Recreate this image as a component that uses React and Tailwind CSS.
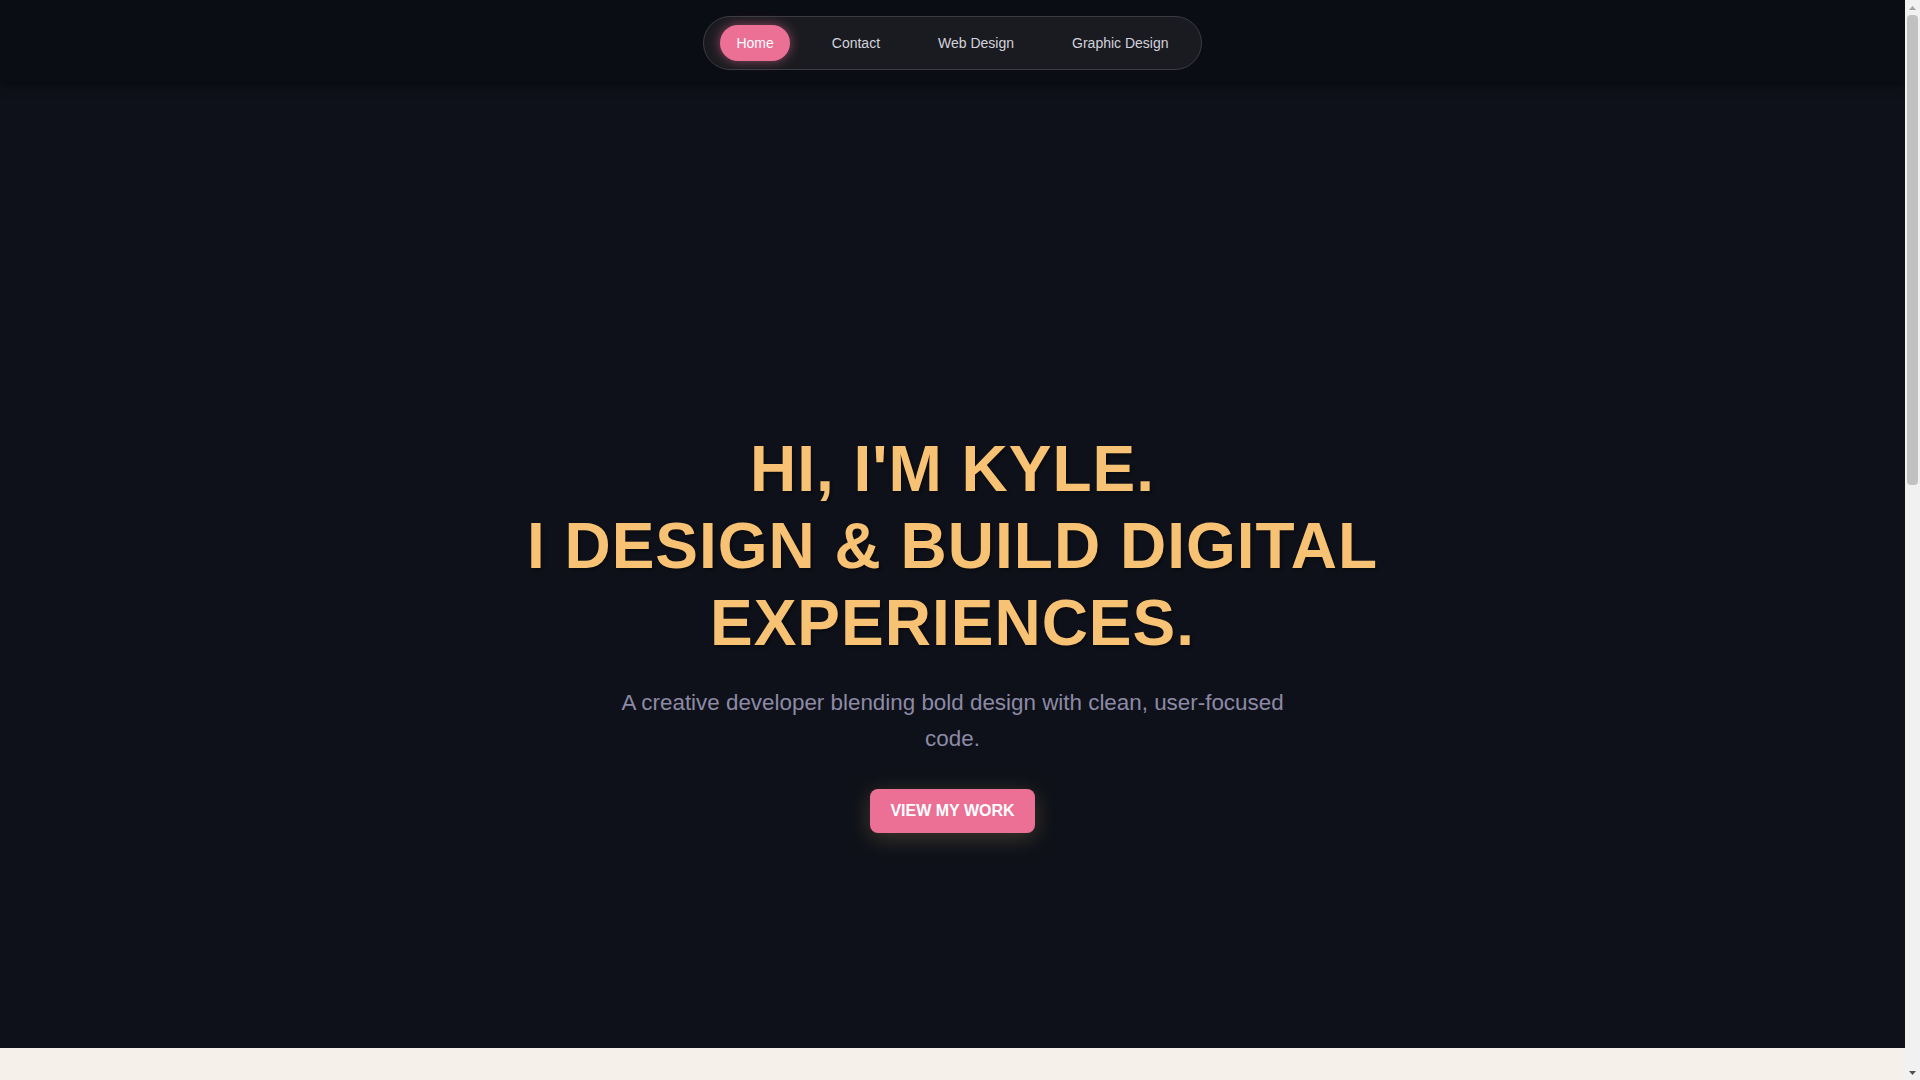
export default function App() {
  const items = ["Home", "Contact", "Web Design", "Graphic Design"];
  return (
    <div className="min-h-screen bg-[#0e1119] pr-[15px] font-['Liberation_Sans',Arial,sans-serif]">
      <header className="sticky top-0 z-10 flex justify-center bg-[#0b0d14] pt-4 pb-3 shadow-[0_2px_10px_rgba(0,0,0,0.55)]">
        <nav className="flex items-center gap-[26px] rounded-full border border-[#3b3c42] bg-[#1a1b20] px-4 py-2">
          {items.map((it, i) =>
            i === 0 ? (
              <a
                key={it}
                className="rounded-full bg-[#ec7096] px-4 py-2 text-sm leading-5 text-white shadow-[0_0_12px_rgba(236,112,150,0.55)]"
              >
                {it}
              </a>
            ) : (
              <a key={it} className="rounded-full px-4 py-2 text-sm leading-5 text-[#d3d3dd]">
                {it}
              </a>
            )
          )}
        </nav>
      </header>

      <section className="flex flex-col items-center pt-[349px] pb-[215px] text-center">
        <h1 className="text-[64px] font-bold leading-[1.2] tracking-[1px] text-[#f7c273] [text-shadow:2px_2px_3px_rgba(0,0,0,0.35)]">
          HI, I'M KYLE.
          <br />I DESIGN &amp; BUILD DIGITAL
          <br />
          EXPERIENCES.
        </h1>
        <p className="mt-6 max-w-2xl text-[22.4px] leading-[1.6] text-[#8d8aa6]">
          A creative developer blending bold design with clean, user-focused code.
        </p>
        <button className="mt-8 rounded-lg bg-[#ec7096] px-5 py-3 text-base font-bold leading-5 text-white shadow-[0_5px_22px_rgba(247,194,115,0.22)]">
          VIEW MY WORK
        </button>
      </section>

      <section className="h-[1350px] bg-[#f5f0ea]"></section>

      <div className="fixed top-0 right-0 z-20 flex h-screen w-[15px] flex-col bg-[#f1f1f1]">
        <div className="flex h-[15px] items-center justify-center">
          <svg width="7" height="4" viewBox="0 0 7 4">
            <path d="M0 4 L3.5 0 L7 4 Z" fill="#a3a3a3" />
          </svg>
        </div>
        <div className="flex-1 px-[2px]">
          <div className="h-[470px] rounded-sm bg-[#c1c1c1]"></div>
        </div>
        <div className="flex h-[15px] items-center justify-center">
          <svg width="7" height="4" viewBox="0 0 7 4">
            <path d="M0 0 L7 0 L3.5 4 Z" fill="#505050" />
          </svg>
        </div>
      </div>
    </div>
  );
}
